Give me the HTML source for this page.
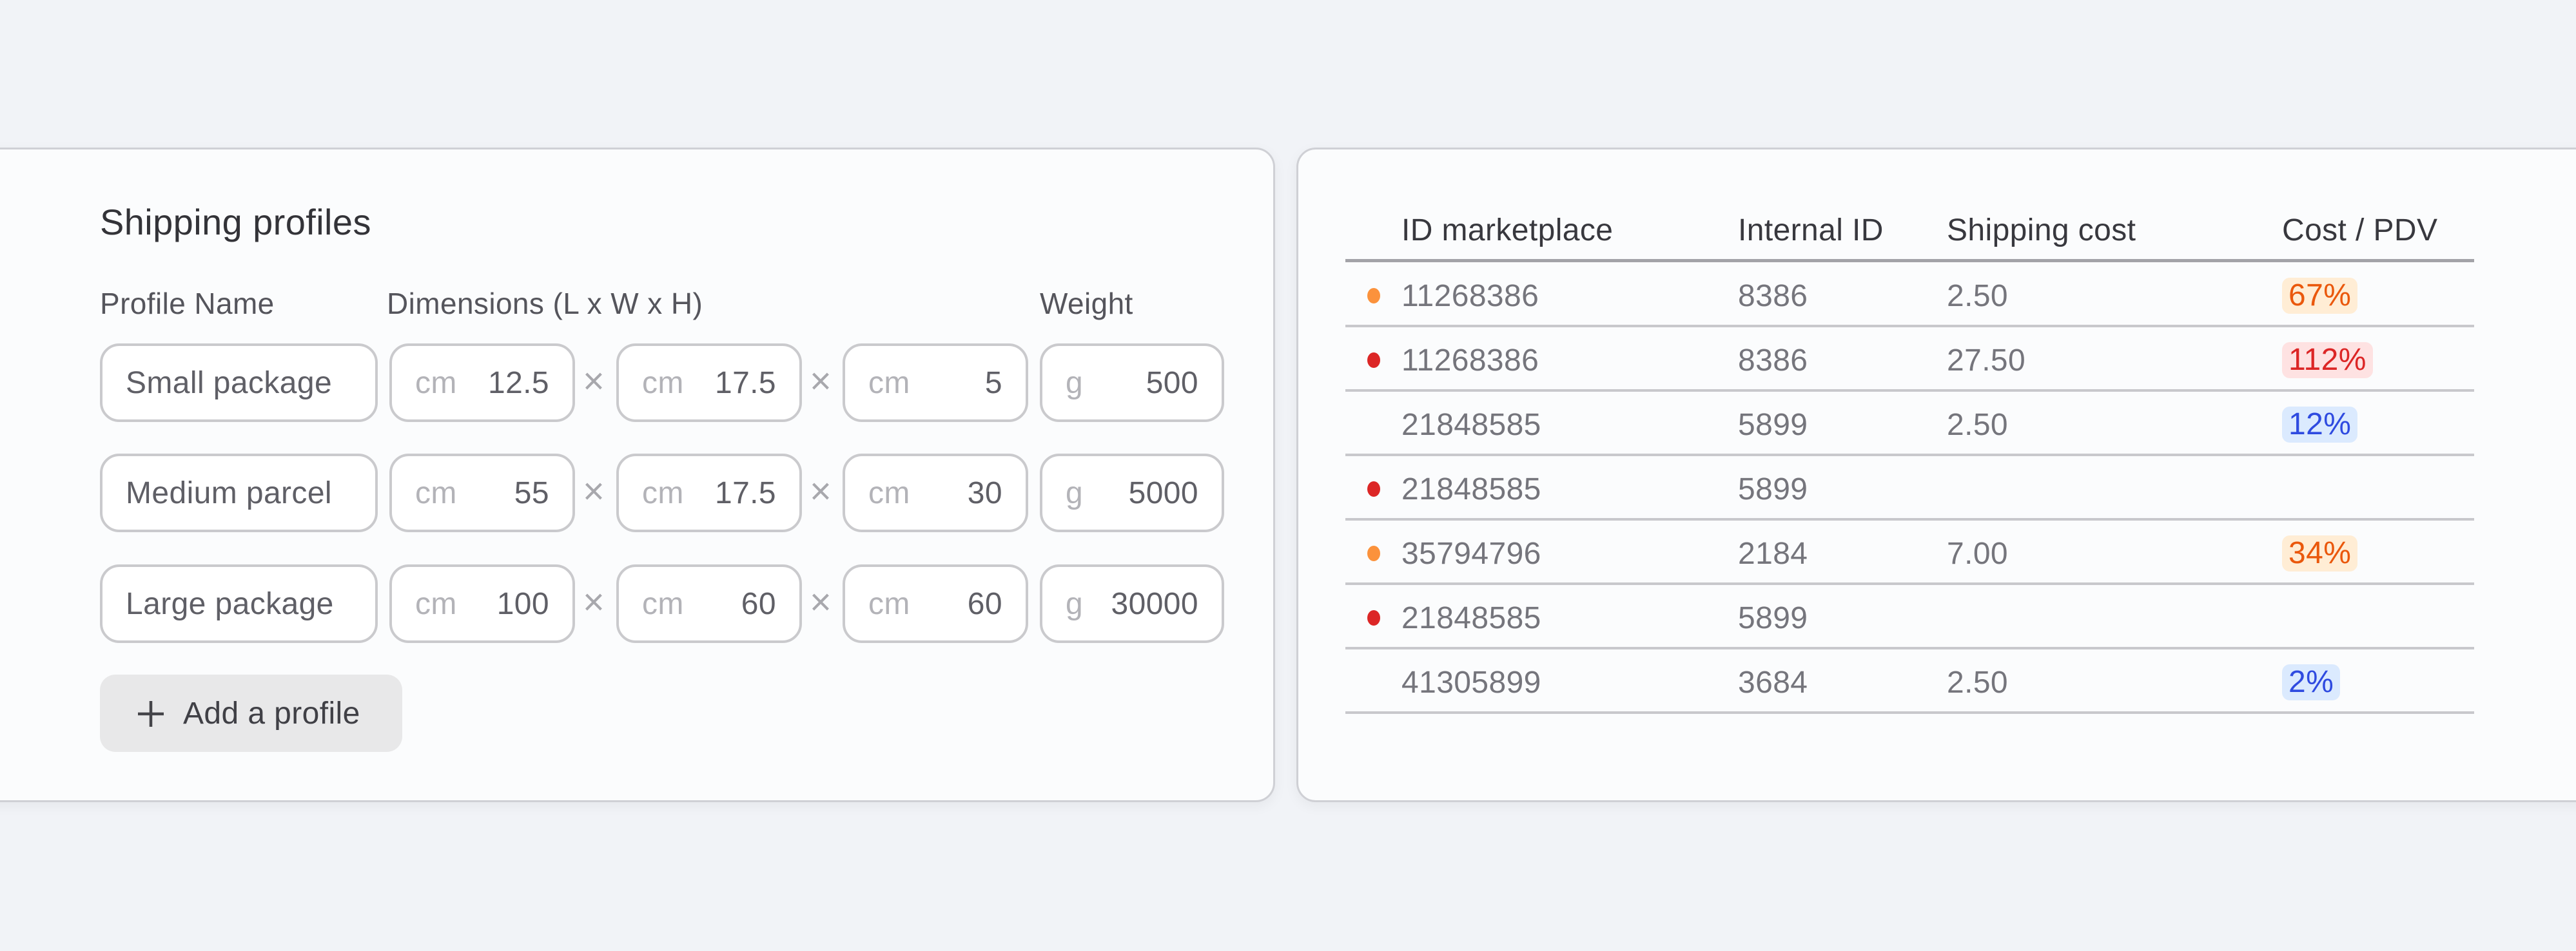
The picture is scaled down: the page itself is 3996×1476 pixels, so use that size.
<!DOCTYPE html>
<html><head><meta charset="utf-8"><style>
*{margin:0;padding:0;box-sizing:border-box}
body{width:3996px;height:1476px;background:#f1f3f7;position:relative;overflow:hidden;font-family:"Liberation Sans",sans-serif;letter-spacing:0.025em}
.card{position:absolute;top:229px;height:1016px;background:#fbfcfd;border:3px solid #cfd0d5;border-radius:30px;box-shadow:0 6px 20px rgba(0,0,0,0.05)}
.a{position:absolute;white-space:nowrap}
.inp{position:absolute;height:122px;background:#fff;border:4px solid #cacacd;border-radius:30px;font-size:48px;color:#5f5f66;display:flex;align-items:center;padding:0 36px}
.u{color:#b3b3b8;flex:1}
.x{position:absolute;font-size:58px;color:#a8a8ad}
.lab{font-size:46px;color:#55555c;top:444px}
.h{font-size:48px;color:#38383e;top:330px}
.t{font-size:48px;color:#75757c}
.line{position:absolute;left:2087px;width:1751px;height:4px;background:#c8c8cc}
.dot{position:absolute;left:2121px;width:20px;height:24px;border-radius:50%}
.b{position:absolute;left:3540px;height:56px;border-radius:12px;font-size:48px;padding:0 10px;line-height:56px}
</style></head><body>
<div class="card" style="left:-40px;width:2018px"></div>
<div class="card" style="left:2011px;width:2100px"></div>

<div class="a" style="left:155px;top:312px;font-size:56px;color:#333338">Shipping profiles</div>
<div class="a lab" style="left:155px">Profile Name</div>
<div class="a lab" style="left:600px">Dimensions (L x W x H)</div>
<div class="a lab" style="left:1613px">Weight</div>

<div class="inp" style="left:155px;top:533px;width:431px">Small package</div>
<div class="inp" style="left:604px;top:533px;width:288px"><span class="u">cm</span>12.5</div>
<div class="x" style="left:904px;top:558px">×</div>
<div class="inp" style="left:956px;top:533px;width:288px"><span class="u">cm</span>17.5</div>
<div class="x" style="left:1256px;top:558px">×</div>
<div class="inp" style="left:1307px;top:533px;width:288px"><span class="u">cm</span>5</div>
<div class="inp" style="left:1613px;top:533px;width:286px"><span class="u">g</span>500</div>

<div class="inp" style="left:155px;top:704px;width:431px">Medium parcel</div>
<div class="inp" style="left:604px;top:704px;width:288px"><span class="u">cm</span>55</div>
<div class="x" style="left:904px;top:729px">×</div>
<div class="inp" style="left:956px;top:704px;width:288px"><span class="u">cm</span>17.5</div>
<div class="x" style="left:1256px;top:729px">×</div>
<div class="inp" style="left:1307px;top:704px;width:288px"><span class="u">cm</span>30</div>
<div class="inp" style="left:1613px;top:704px;width:286px"><span class="u">g</span>5000</div>

<div class="inp" style="left:155px;top:876px;width:431px">Large package</div>
<div class="inp" style="left:604px;top:876px;width:288px"><span class="u">cm</span>100</div>
<div class="x" style="left:904px;top:901px">×</div>
<div class="inp" style="left:956px;top:876px;width:288px"><span class="u">cm</span>60</div>
<div class="x" style="left:1256px;top:901px">×</div>
<div class="inp" style="left:1307px;top:876px;width:288px"><span class="u">cm</span>60</div>
<div class="inp" style="left:1613px;top:876px;width:286px"><span class="u">g</span>30000</div>

<div class="a" style="left:155px;top:1047px;width:469px;height:120px;background:#e8e8e9;border-radius:24px"></div>
<svg class="a" style="left:210px;top:1084px" width="48" height="48" viewBox="0 0 48 48"><path d="M24 4V44M4 24H44" stroke="#444449" stroke-width="4.5"/></svg>
<div class="a" style="left:284px;top:1080px;font-size:48px;color:#404046">Add a profile</div>

<div class="a h" style="left:2174px">ID marketplace</div>
<div class="a h" style="left:2696px">Internal ID</div>
<div class="a h" style="left:3020px">Shipping cost</div>
<div class="a h" style="left:3540px">Cost / PDV</div>
<div class="line" style="top:402px;height:5px;background:#a3a3a8"></div>

<div class="dot" style="top:447px;background:#fb923c"></div>
<div class="a t" style="left:2174px;top:432px">11268386</div><div class="a t" style="left:2696px;top:432px">8386</div><div class="a t" style="left:3020px;top:432px">2.50</div>
<div class="b" style="top:431px;background:#ffedd5;color:#ea580c">67%</div>
<div class="line" style="top:504px"></div>

<div class="dot" style="top:547px;background:#dc2626"></div>
<div class="a t" style="left:2174px;top:532px">11268386</div><div class="a t" style="left:2696px;top:532px">8386</div><div class="a t" style="left:3020px;top:532px">27.50</div>
<div class="b" style="top:531px;background:#fee2e2;color:#dc2626">112%</div>
<div class="line" style="top:604px"></div>

<div class="a t" style="left:2174px;top:632px">21848585</div><div class="a t" style="left:2696px;top:632px">5899</div><div class="a t" style="left:3020px;top:632px">2.50</div>
<div class="b" style="top:631px;background:#dbeafe;color:#2f4be0">12%</div>
<div class="line" style="top:704px"></div>

<div class="dot" style="top:747px;background:#dc2626"></div>
<div class="a t" style="left:2174px;top:732px">21848585</div><div class="a t" style="left:2696px;top:732px">5899</div>
<div class="line" style="top:804px"></div>

<div class="dot" style="top:847px;background:#fb923c"></div>
<div class="a t" style="left:2174px;top:832px">35794796</div><div class="a t" style="left:2696px;top:832px">2184</div><div class="a t" style="left:3020px;top:832px">7.00</div>
<div class="b" style="top:831px;background:#ffedd5;color:#ea580c">34%</div>
<div class="line" style="top:904px"></div>

<div class="dot" style="top:947px;background:#dc2626"></div>
<div class="a t" style="left:2174px;top:932px">21848585</div><div class="a t" style="left:2696px;top:932px">5899</div>
<div class="line" style="top:1004px"></div>

<div class="a t" style="left:2174px;top:1032px">41305899</div><div class="a t" style="left:2696px;top:1032px">3684</div><div class="a t" style="left:3020px;top:1032px">2.50</div>
<div class="b" style="top:1031px;background:#dbeafe;color:#2f4be0">2%</div>
<div class="line" style="top:1104px"></div>
</body></html>
